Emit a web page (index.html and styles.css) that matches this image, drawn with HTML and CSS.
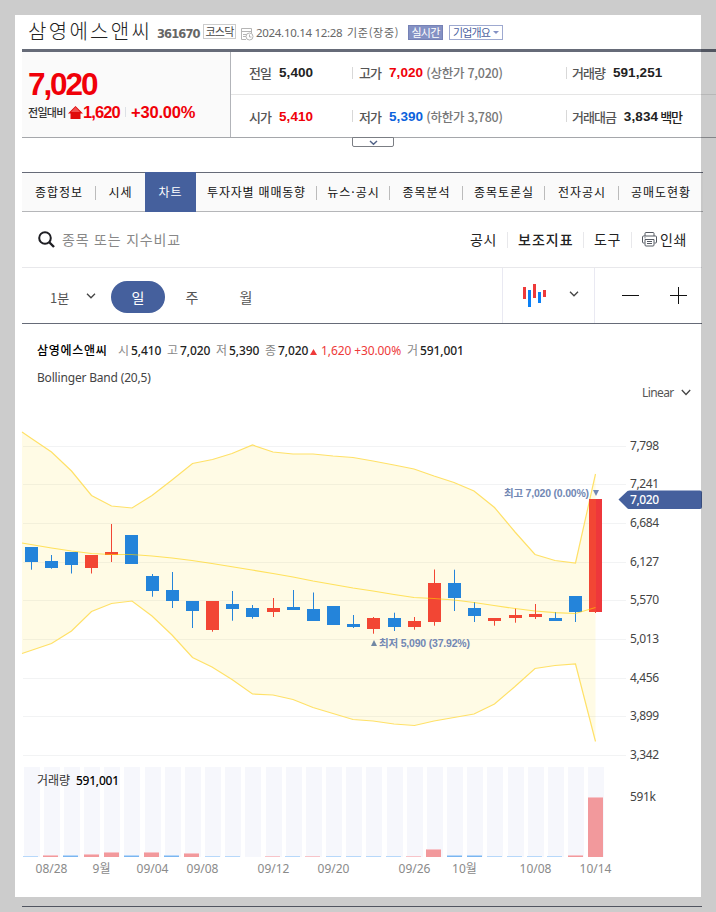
FILE: index.html
```html
<!DOCTYPE html>
<html lang="ko">
<head>
    <meta charset="UTF-8">
    <meta name="viewport" content="width=device-width, initial-scale=1.0">
    <title>삼영에스앤씨</title>
    <link rel="stylesheet" href="styles.css">
</head>
<body>
    <div class="container">
        <div class="title-row">
            <h1>삼영에스앤씨</h1>
            <span class="code">361670</span>
            <span class="market">코스닥</span>
            <svg class="clock-icon" width="13" height="13" viewBox="0 0 13 13" fill="none" stroke="#b5b5b5">
                <path d="M5 11.5H.5v-11h10V5M.5 3.5h10M2 6.5h4M2 8.500h3"/>
                <circle cx="8.500" cy="8.500" r="3.500" fill="#fff"/>
                <path d="M8.500 6.500v2.500h2"/>
            </svg>
            <span class="date">2024.10.14 12:28</span>
            <span class="basis">기준(장중)</span>
            <span class="realtime">실시간</span>
            <span class="outline">기업개요<i></i></span>
        </div>

        <div class="quote">
            <div class="today">
                <strong class="price">7,020</strong>
                <div class="diff">
                    <span class="diff-label">전일대비</span>
                    <svg width="15" height="13" viewBox="0 0 15 13"><path d="M7.500 0L15 7.500h-2.500V13h-10V7.500H0z" fill="#e00a0a"/><path d="M7.500 1L12 6H3z" fill="#f05050"/></svg>
                    <b class="diff-value">1,620</b>
                    <b class="diff-rate">+30.00%</b>
                </div>
            </div>
            <div class="figures">
                <div class="figure-row">
                    <div class="figure"><span>전일</span><b>5,400</b></div>
                    <div class="figure"><span>고가</span><b class="up">7,020</b><em>(상한가 7,020)</em></div>
                    <div class="figure"><span>거래량</span><b class="volume">591,251</b></div>
                </div>
                <div class="figure-row">
                    <div class="figure"><span>시가</span><b class="up">5,410</b></div>
                    <div class="figure"><span>저가</span><b class="down">5,390</b><em>(하한가 3,780)</em></div>
                    <div class="figure"><span>거래대금</span><b class="amount">3,834</b><strong>백만</strong></div>
                </div>
            </div>
        </div>
        <button class="more"><svg width="9" height="6" viewBox="0 0 9 6"><path d="M1 1l3.500 3.200L8 1" fill="none" stroke="#536488" stroke-width="1.500"/></svg></button>

        <div class="tabs">
            <a class="line">종합정보</a>
            <a>시세</a>
            <a class="active">차트</a>
            <a class="line wide">투자자별 매매동향</a>
            <a class="line">뉴스·공시</a>
            <a class="line">종목분석</a>
            <a class="line">종목토론실</a>
            <a class="line">전자공시</a>
            <a>공매도현황</a>
        </div>

        <div class="search-bar">
            <svg width="17" height="17" viewBox="0 0 17 17" fill="none" stroke="#1e1e23" stroke-width="2"><circle cx="7" cy="7" r="5.800"/><path d="M11 11l5 5" stroke-width="2.400"/></svg>
            <span class="placeholder">종목 또는 지수비교</span>
            <div class="tools">
                <span class="tool disclosure">공시</span>
                <span class="tool indicator">보조지표</span>
                <span class="tool util">도구</span>
                <span class="tool print">
                    <svg width="15" height="15" viewBox="0 0 15 15" fill="none" stroke="#555a63"><path d="M3 4V1.500q0-1 1-1h7q1 0 1 1V4M2.500 11H1.500q-1 0-1-1V5q0-1 1-1h12q1 0 1 1v5q0 1-1 1h-1M3 7.500h9V13q0 1-1 1H4q-1 0-1-1zM5 9.500h5M5 11.500h5M2.500 5.800h1"/></svg>
                    인쇄
                </span>
            </div>
        </div>

        <div class="period-bar">
            <span class="minute">1분</span>
            <svg class="arrow" width="10" height="6" viewBox="0 0 10 6"><path d="M1 .8l4 4 4-4"/></svg>
            <span class="day">일</span>
            <span class="week">주</span>
            <span class="month">월</span>
            <div class="chart-type">
                <svg width="24" height="24" viewBox="0 0 24 24"><path d="M0 3h3v12H0zM10 0h3v14h-3zM20 6h3v7h-3z" fill="#ee3a3a"/><path d="M5 6h3v17H5zM15 8h3v11h-3z" fill="#0a7ff5"/></svg>
                <svg class="arrow" width="10" height="6" viewBox="0 0 10 6"><path d="M1 .8l4 4 4-4"/></svg>
            </div>
            <div class="zoom">
                <svg width="17" height="17" viewBox="0 0 17 17"><path d="M0 8.500h17" stroke="#111"/></svg>
                <svg width="17" height="17" viewBox="0 0 17 17"><path d="M0 8.500h17M8.500 0v17" stroke="#111"/></svg>
            </div>
        </div>

        <div class="legend">
            <strong>삼영에스앤씨</strong>
            <span class="item"><i>시</i>5,410</span>
            <span class="item"><i>고</i>7,020</span>
            <span class="item"><i>저</i>5,390</span>
            <span class="item"><i>종</i>7,020</span>
            <span class="change"><svg width="7" height="6" viewBox="0 0 7 6"><path d="M3.500 0L7 6H0z" fill="#ee3a3a"/></svg>1,620 +30.00%</span>
            <span class="item"><i>거</i>591,001</span>
        </div>
        <div class="study">Bollinger Band (20,5)</div>
        <div class="scale">Linear<svg class="arrow" width="10" height="7" viewBox="0 0 10 7"><path d="M.8 1L5 5.500 9.200 1"/></svg></div>

        <svg id="chart" width="681" height="480" viewBox="22 400 681 480"></svg>
        <div class="bottom-line"></div>
    </div>
    <script src="script.js"></script>
</body>
</html>
```
FILE: styles.css
```css
* {
    margin: 0;
    padding: 0;
    box-sizing: border-box;
}

body {
    height: 912px;
    background: #fff;
    color: #222;
    font-family: "Noto Sans", "Noto Sans CJK KR", sans-serif;
    font-size: 12px;
    overflow: hidden;
}

/* translucent frame over the page edges */
body::after {
    content: "";
    position: absolute;
    top: 0;
    left: 0;
    box-sizing: border-box;
    width: 716px;
    height: 912px;
    border: 15px solid rgba(0, 0, 0, 0.2);
    pointer-events: none;
}

.container {
    width: 694px;
    margin-left: 22px;
    padding-top: 15px;
}

.container span, .container a, .container b, .container em, .container h1 {
    white-space: nowrap;
}

i, em {
    font-style: normal;
}

/* title */
.title-row {
    display: grid;
    grid-template-columns: 129px 46px 38px 15px 91px 60px 42px 55px;
    align-items: center;
    height: 34px;
    padding-left: 6px;
    color: #666;
}

h1 {
    font: 300 20px/34px "Noto Sans CJK KR", sans-serif;
    letter-spacing: 2.3px;
    color: #222;
    margin-top: -3px;
}

.code {
    font: bold 11.5px "DejaVu Sans", sans-serif;
    letter-spacing: -0.9px;
    padding-top: 3px;
}

.market, .realtime, .outline {
    height: 15px;
    margin-top: 1px;
    font: 11px/13px "Noto Sans CJK KR", sans-serif;
    letter-spacing: -0.8px;
    text-align: center;
    border: 1px solid #ccc;
    color: #444;
}

.market {
    width: 33px;
    margin-top: -1px;
    line-height: 12px;
}

.clock-icon {
    margin-top: 4px;
}

.date {
    font: 11.5px "Noto Sans", sans-serif;
    letter-spacing: -0.3px;
}

.basis {
    font: 11px "Noto Sans CJK KR", sans-serif;
    letter-spacing: 0.7px;
}

.realtime {
    width: 35px;
    margin-left: 1px;
    background: #8491c4;
    border-color: #7581b5;
    color: #fff;
}

.outline {
    width: 54px;
    border-color: #9ea9d0;
    color: #4c5fa0;
    letter-spacing: -0.9px;
}

.outline i {
    display: inline-block;
    margin: 0 0 3px 3px;
    border: 3px solid transparent;
    border-bottom: 0;
    border-top-color: #8491c4;
}

/* quote */
.quote {
    display: flex;
    height: 89px;
    border-top: 3px solid #666b78;
    border-bottom: 1px solid #a5a7ab;
}

.today {
    width: 209px;
    padding: 15px 0 0 6px;
    background: #fafafa;
    border-right: 1px solid #b2b4b9;
    font-family: "Liberation Sans", "Noto Sans CJK KR", sans-serif;
    color: #f00008;
}

.price {
    display: block;
    font-size: 31.5px;
    line-height: 35px;
    letter-spacing: -2.1px;
}

.diff {
    display: flex;
    align-items: center;
    height: 20px;
}

.diff-label {
    width: 40px;
    font: 500 11px/20px "Noto Sans CJK KR", sans-serif;
    letter-spacing: -0.7px;
    color: #333;
}

.diff-value, .diff-rate {
    font-size: 16.5px;
    line-height: 20px;
    letter-spacing: -0.9px;
}

.diff-value {
    width: 42px;
}

.diff-rate {
    padding-left: 6px;
    letter-spacing: -0.2px;
    background: linear-gradient(#dde1e6, #dde1e6) 0 5px / 1px 10px no-repeat;
}

.figures {
    flex: 1;
}

.figure-row {
    display: grid;
    grid-template-columns: 121px 214px 1fr;
    align-items: center;
    height: 43px;
    padding-bottom: 1px;
}

.figure-row:first-child {
    border-bottom: 1px solid #e5e5e5;
}

.figure {
    display: flex;
    align-items: center;
    height: 12px;
    padding-left: 6px;
    border-left: 1px solid #d8d8d8;
    font: bold 13.5px "Liberation Sans", "Noto Sans CJK KR", sans-serif;
}

.figure:first-child {
    padding-left: 18px;
    border: 0;
}

.figure:last-child {
    padding-left: 5px;
}

.figure span, .figure em, .figure strong {
    font: 500 13px "Noto Sans CJK KR", sans-serif;
    letter-spacing: -1px;
    color: #555;
}

.figure b {
    margin-left: 8px;
    letter-spacing: 0.1px;
}

.figure em {
    font-size: 12.5px;
    margin-left: 3px;
    color: #777;
    letter-spacing: -0.25px;
}

.figure strong {
    margin-left: 2px;
    color: #222;
}

.figure .volume, .figure .amount {
    margin-left: 8px;
}

.figure .up {
    color: #f00008;
}

.figure .down {
    color: #0b62dc;
}

.more {
    display: flex;
    justify-content: center;
    width: 42px;
    height: 10px;
    margin: -1px 0 25px 330px;
    padding-top: 2px;
    background: #fff;
    border: 1px solid #7b7e84;
    border-radius: 0 0 2px 2px;
}

/* tabs */
.tabs {
    display: grid;
    grid-template-columns: 74px 49px 51px 121px 73px 73px 82px 74px 84px;
    width: 681px;
    height: 40px;
    background: #fafafa;
    border-top: 1px solid #666b78;
    border-bottom: 1px solid #b5b6b9;
}

.tabs a {
    font: 12px/38px "Noto Sans CJK KR", sans-serif;
    letter-spacing: 1px;
    text-align: center;
    color: #111;
}

.tabs .wide {
    letter-spacing: 0.8px;
}

.tabs .line {
    background: linear-gradient(#bbb, #bbb) right 13px / 1px 14px no-repeat;
}

.tabs .active {
    height: 40px;
    margin-top: -1px;
    line-height: 40px;
    background: #45609d;
    color: #fff;
}

/* search */
.search-bar {
    display: flex;
    align-items: center;
    width: 680px;
    height: 56px;
    padding-left: 16px;
    border-bottom: 1px solid #e8e8eb;
    font: 14px "Noto Sans CJK KR", sans-serif;
}

.placeholder {
    margin: -2px 0 0 7px;
    letter-spacing: 0.8px;
    color: #888;
}

.tools {
    display: flex;
    margin-left: auto;
    line-height: 15px;
}

.tool {
    height: 16px;
    padding: 0 0 0 10px;
    border-left: 1px solid #e8e8eb;
    letter-spacing: 0.7px;
}

.disclosure {
    width: 47px;
    border: 0;
}

.indicator {
    width: 76px;
    font-weight: 500;
    letter-spacing: 1px;
}

.util {
    width: 48px;
}

.print {
    display: flex;
    gap: 3px;
    width: 71px;
}

.arrow path {
    fill: none;
    stroke: #444;
    stroke-width: 1.3;
}

.period-bar {
    display: grid;
    grid-template-columns: 36px 25px 54px 54px 54px 1fr 92px 108px;
    align-items: center;
    width: 680px;
    height: 56px;
    padding-left: 28px;
    border-bottom: 1px solid #666b78;
    font: 14px "Noto Sans CJK KR", sans-serif;
    text-align: center;
    color: #555;
}

.minute {
    font-size: 13px;
    text-align: left;
}

.period-bar > span {
    margin-top: 3px;
}

.period-bar .day {
    height: 32px;
    line-height: 32px;
    border-radius: 16px;
    background: #45609d;
    color: #fff;
}

.chart-type, .zoom {
    display: flex;
    grid-column: 7;
    align-items: center;
    height: 55px;
    border-left: 1px solid #e9e9f2;
}

.chart-type {
    gap: 22px;
    padding-left: 20px;
}

.chart-type .arrow {
    margin-top: -4px;
}

.zoom {
    grid-column: 8;
    gap: 31px;
    padding-left: 27px;
}

/* legend */
.legend {
    display: flex;
    height: 18px;
    margin: 18px 0 10px 15px;
    line-height: 18px;
    letter-spacing: -0.1px;
}

.legend strong {
    width: 81px;
    font-weight: 500;
    letter-spacing: 0.7px;
    color: #000;
}

.item {
    width: 49px;
    font-weight: 500;
}

.item i {
    margin-right: 2px;
    font-weight: 400;
    color: #888;
}

.change {
    width: 97px;
    margin-left: -4px;
    color: #ee3a3a;
}

.change svg {
    margin-right: 4px;
}

.study {
    height: 16px;
    margin-left: 15px;
    line-height: 16px;
    letter-spacing: -0.18px;
    color: #444;
}

.scale {
    display: flex;
    align-items: center;
    gap: 7px;
    height: 16px;
    margin: -2px 0 0 620px;
    letter-spacing: -0.6px;
    color: #555;
}

#chart {
    display: block;
    overflow: visible;
}

#chart text {
    font-size: 12px;
    fill: #444;
}

#chart .date-label {
    fill: #8a8a8a;
    text-anchor: middle;
}

#chart .high-low {
    font: bold 10.5px "Liberation Sans", "Noto Sans CJK KR", sans-serif;
    fill: #7288b4;
}

#chart .current {
    fill: #fff;
    font-weight: 500;
}

#chart .volume-label {
    fill: #333;
}

#chart .volume-label tspan {
    font-weight: 500;
    fill: #000;
}

.bottom-line {
    width: 680px;
    height: 1px;
    margin-top: 26px;
    background: #666b78;
}
```
FILE: script.js
```js
var RED = "#f24634";
var BLUE = "#2484da";

// [x, open/close top, bottom, high, low, color, volume x, volume height]
var candles = [
    [31.5, 547, 562, 547, 569.7, "b", 23, 1],
    [51.5, 561, 568, 555, 568.7, "b", 43, 2, "r"],
    [71.5, 552, 565, 552, 573.5, "b", 63, 2],
    [91.5, 555, 568, 555, 573.5, "r", 84, 3],
    [111.5, 552, 555, 524, 562, "r", 104, 5],
    [131.5, 535, 564, 535, 564, "b", 124, 2],
    [152.5, 576, 591, 574, 596.7, "b", 144, 5, "r"],
    [172.5, 590, 601, 572, 608, "b", 164, 2],
    [192.5, 601, 611, 601, 628, "b", 184, 4, "r"],
    [212.5, 601, 630, 601, 631.7, "r", 205, 1, "b"],
    [232.5, 604, 609, 591, 620.7, "b", 225, 1],
    [252.5, 608, 617, 605, 618.7, "b", 245, 0],
    [273.5, 608, 612, 598, 617, "r", 265, 1],
    [293.5, 607, 610, 590, 610, "b", 285, 1],
    [313.5, 609, 621, 592.5, 621, "b", 305, 1, "r"],
    [333.5, 606, 625, 606, 625, "b", 326, 1],
    [353.5, 624, 627, 615, 628, "b", 346, 1],
    [373.5, 618, 629, 617, 633.7, "r", 366, 1, "b"],
    [394.5, 618, 627, 612.7, 631, "b", 386, 1],
    [414.5, 621, 627, 617, 629.7, "r", 406, 1],
    [434.5, 583, 622, 569.5, 625.7, "r", 426, 8],
    [454.5, 583, 598, 569.7, 611, "b", 447, 2],
    [474.5, 608, 616, 602, 622, "b", 467, 2],
    [494.5, 618, 621, 618, 625.7, "r", 487, 1, "b"],
    [515.5, 615, 618, 608.5, 622.7, "r", 507, 1, "b"],
    [535.5, 614, 617, 604, 619, "r", 527, 1, "b"],
    [555.5, 618, 621, 612, 621, "b", 547, 1],
    [575.5, 596, 612, 596, 622, "b", 568, 2, "r"],
    [595.5, 499, 612, 499, 613, "r", 588, 60]
];

var upper = "22,432 31.5,438.5 51.5,452 71.5,471 91.5,495.5 111.5,506 132,508 152,495.5 172,480 192.5,463.5 212.5,459.5 232,453.5 252.5,445 273,452 293,454 313,454 333,456 353,457.5 373,461 394,465 414,469 434,476 454,482.5 474,491 494.5,507.5 515,532 535,554.5 555,560.5 575.5,563 595.5,474";
var middle = "22,543 51.5,548 71.5,551 91.5,553.5 111.5,554.5 131.5,554.5 152,556 172,558 192,560.5 212,563.5 252,570 273,573.5 293,577 313,581 333,584.5 353,588 373,591 394,594.5 414,597.5 434,598.5 454,600 474,602.5 494,605.5 515,608.5 535,611 555,612.7 575.5,613.5 595.5,607.5";
var lower = "22,653.5 51.5,643.5 71.5,631 91.5,611.5 111.5,603.5 132,601 152,616 172,635 192.5,657.5 212,667 232,679.5 252.5,694 273,695 293,699.5 313,707.5 333,713.5 353,719.5 373,721 394,724 414.5,725.5 434,721 454,717.5 474,714 494.5,704 515,686.5 535,668.5 555,665.5 575.5,664 595.5,741.5";

var prices = [[446, "7,798"], [484, "7,241"], [523, "6,684"], [562, "6,127"], [600, "5,570"], [639, "5,013"], [678, "4,456"], [716, "3,899"], [755, "3,342"]];
var dates = [[51.5, "08/28"], [101.5, "9월"], [152.5, "09/04"], [202.5, "09/08"], [273.5, "09/12"], [333.5, "09/20"], [414.5, "09/26"], [464.5, "10월"], [535.5, "10/08"], [595.5, "10/14"]];

function rect(x, y, w, h, fill) {
    return '<rect x="' + x + '" y="' + y + '" width="' + w + '" height="' + h + '" fill="' + fill + '"/>';
}

function text(x, y, str, cls, width) {
    return '<text x="' + x + '" y="' + y + '" class="' + cls + '"' + (width ? ' textLength="' + width + '"' : '') + '>' + str + '</text>';
}

function line(points, color) {
    return '<polyline points="' + points + '" fill="none" stroke="' + color + '" stroke-width="1.2"/>';
}

var out = "";

prices.forEach(function (p) {
    out += rect(23, p[0], 603, 1, "#f2f3f4");
    out += text(630, p[0] + 4, p[1], "price-label", 29);
});

// bollinger band
out += '<polygon points="' + upper + ' ' + lower.split(" ").reverse().join(" ") + '" fill="#ffd400" fill-opacity="0.1"/>';
out += line(upper, "#ffe168") + line(lower, "#ffe168");

// candles
candles.forEach(function (c) {
    var color = c[5] === "r" ? RED : BLUE;
    out += rect(c[0] - 0.5, c[3], 1, c[4] - c[3], color);
    out += rect(c[0] - 6.5, c[1], 13, c[2] - c[1], color);
});
out += rect(596, 499, 6, 113, "#ee373b");
out += line(middle, "rgba(255, 208, 0, 0.6)");

// volume
candles.forEach(function (c) {
    var red = (c[8] || c[5]) === "r";
    var h = c[7];
    out += rect(c[0] - 7.5, 767, 16, 90, "#f6f7fc");
    if (h > 0) {
        out += rect(c[6], 857 - h, 15, 1, red ? "#f7c4c9" : "#b7d8fa");
        out += rect(c[6], 858 - h, 15, h - 1, red ? "#f2999c" : "#7ab5f0");
    }
});

dates.forEach(function (d) {
    out += text(d[0], 873, d[1], "date-label");
});
out += text(630, 801, "591k", "price-label", 26);
out += '<text x="37" y="785" class="volume-label">거래량 <tspan x="76" textLength="43">591,001</tspan></text>';

out += text(504, 497, "최고 7,020 (0.00%)", "high-low", 85);
out += '<path d="M593 490h6l-3 6z" fill="#7288b4"/>';
out += '<path d="M371 646h6l-3-6z" fill="#7288a4"/>';
out += text(379, 647, "최저 5,090 (37.92%)", "high-low", 91);

out += '<path d="M618.500 499.500L627.500 491q1-.5 2-.5H700q2 0 2 2v14.500q0 2-2 2H629.500q-1 0-2-.5z" fill="#45609d"/>';
out += text(630, 504, "7,020", "current", 29);

document.getElementById("chart").innerHTML = out;
```
